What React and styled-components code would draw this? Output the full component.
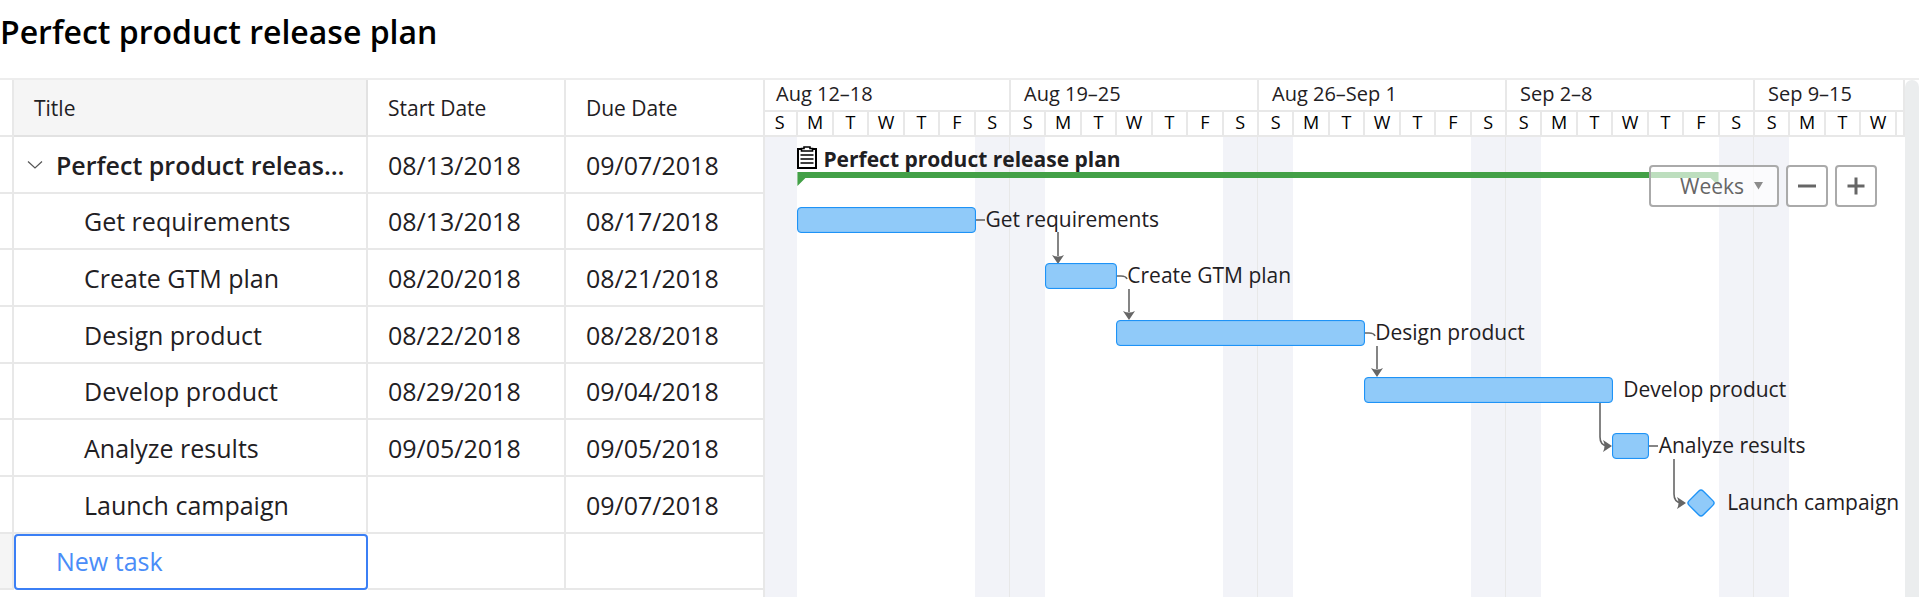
import React from 'react';
import styled, { createGlobalStyle, css } from 'styled-components';

const LINE = '#e8e8e8';

const GlobalStyle = createGlobalStyle`
  *, *::before, *::after { box-sizing: border-box; }
  body {
    margin: 0;
    background: #fff;
    color: #1f2023;
    font-family: 'Open Sans', 'Liberation Sans', sans-serif;
  }
`;

const Page = styled.main`
  display: flex;
  flex-direction: column;
  min-height: 100vh;
`;

const PageTitle = styled.h1`
  margin: 0;
  height: 78px;
  padding-top: 11px;
  font-size: 32px;
  line-height: 42px;
  font-weight: 600;
  color: #000;
`;

const Workspace = styled.div`
  flex: 1;
  display: flex;
  border-top: 2px solid #ededed;
`;

/* Rows share a 57px / 56px rhythm on both sides of the split. */
const rowHeight = css`
  height: 57px;
  &:nth-child(3n + 2) { height: 56px; }
`;

const Sheet = styled.table`
  flex: none;
  align-self: flex-start;
  width: 763px;
  table-layout: fixed;
  border-collapse: separate;
  border-spacing: 0;
`;

const HeadCell = styled.th`
  height: 57px;
  padding: 0 0 0 20px;
  border-right: 2px solid ${LINE};
  border-bottom: 2px solid ${LINE};
  background: ${(p) => (p.$active ? '#f5f5f5' : 'transparent')};
  ${(p) => p.$active && 'border-color: #e2e2e2;'}
  font-size: 21px;
  font-weight: 400;
  text-align: left;
  &:last-child { border-right: 0; }
`;

const SheetRow = styled.tr`
  ${rowHeight}
`;

const Cell = styled.td`
  padding: 0 0 0 ${(p) => p.$indent || 20}px;
  border-right: 2px solid ${LINE};
  border-bottom: 2px solid ${LINE};
  background: ${(p) => (p.$shaded ? '#f5f5f5' : 'transparent')};
  font-size: 25px;
  line-height: 32px;
  white-space: nowrap;
  &:last-child { border-right: 0; }
`;

const ParentTitle = styled.div`
  display: flex;
  align-items: center;
  gap: 13px;
  padding-right: 20px;
  font-weight: 600;
`;

const Ellipsis = styled.span`
  overflow: hidden;
  text-overflow: ellipsis;
`;

const Toggle = styled.button`
  flex: none;
  display: flex;
  width: 16px;
  padding: 0;
  border: 0;
  background: none;
`;

const NewTaskCell = styled.td`
  padding: 0;
`;

const NewTask = styled.input`
  display: block;
  width: 100%;
  height: 56px;
  padding: 0 0 2px 40px;
  border: 2px solid #3b7ff5;
  border-radius: 4px;
  outline: 0;
  background: #fff;
  font: 25px/32px 'Open Sans', sans-serif;
  &::placeholder { color: #4a8df8; opacity: 1; }
`;

const ChartPane = styled.section`
  flex: 1;
  min-width: 0;
  display: flex;
  flex-direction: column;
  position: relative;
  overflow: hidden;
  border-left: 2px solid ${LINE};
`;

const TimelineFrame = styled.div`
  flex: none;
  overflow: hidden;
  border-right: 2px solid ${LINE};
`;

const Timeline = styled.div`
  display: flex;
  width: 1240px;
  height: 57px;
  margin-left: -4px;
  border-bottom: 2px solid ${LINE};
`;

const Week = styled.div`
  width: 248px;
  display: flex;
  flex-direction: column;
`;

const WeekLabel = styled.div`
  height: 32px;
  padding-left: 13px;
  border-left: 2px solid ${LINE};
  border-bottom: 2px solid ${LINE};
  font-size: 20px;
  line-height: 28px;
`;

const Days = styled.div`
  flex: 1;
  display: grid;
  grid-template-columns: repeat(7, 1fr);
`;

const Day = styled.div`
  border-left: 2px solid ${LINE};
  font-size: 18px;
  line-height: 21px;
  text-align: center;
  color: #000;
`;

const Canvas = styled.div`
  flex: 1;
  display: grid;
  width: 1240px;
  margin-left: -3px;
  & > * { grid-area: 1 / 1; }
`;

const Stripes = styled.div`
  display: grid;
  grid-template-columns: repeat(35, 1fr);
`;

const Stripe = styled.div`
  background: ${(p) => (p.$weekend ? '#f2f3f8' : 'transparent')};
  border-right: ${(p) => (p.$weekEnd ? 1 : 0)}px solid ${LINE};
`;

const Rows = styled.div`
  display: flex;
  flex-direction: column;
`;

const ChartRow = styled.div`
  ${rowHeight}
  flex: none;
  display: grid;
  grid-template-columns: repeat(35, 1fr);
  grid-auto-rows: max-content;
`;

const Bar = styled.div`
  grid-column: ${(p) => p.$from} / ${(p) => p.$to};
  height: 26px;
  margin: 13px -1px 0 0;
  border: 1px solid #1e93f7;
  border-radius: 4px;
  background: #90caf9;
  box-shadow: inset 0 0 1px #1e93f7;
`;

const Label = styled.div`
  grid-column: ${(p) => p.$from} / -1;
  margin-top: 12px;
  padding-left: 11px;
  font-size: 21px;
  line-height: 26px;
  white-space: nowrap;
`;

const Milestone = styled.div`
  grid-column: ${(p) => p.$from} / -1;
  display: flex;
  align-items: flex-start;
  padding-left: 3px;
`;

const Diamond = styled.svg`
  flex: none;
  margin-top: 11px;
`;

const SummaryHead = styled.div`
  grid-column: 2 / -1;
  display: flex;
  gap: 6px;
  height: 35px;
  padding-top: 9px;
  font-size: 21px;
  line-height: 26px;
  font-weight: 700;
`;

const SummaryBar = styled.div`
  grid-column: ${(p) => p.$from} / ${(p) => p.$to};
  height: 14px;
  background: #43a047;
  clip-path: polygon(0 0, 100% 0, 100% 100%, calc(100% - 8px) 6px, 8px 6px, 0 100%);
`;

const Links = styled.svg`
  pointer-events: none;
`;

const ZoomBar = styled.div`
  position: absolute;
  top: 85px;
  right: 28px;
  display: flex;
  gap: 7px;
`;

const SelectWrap = styled.label`
  position: relative;
  display: block;
  svg {
    position: absolute;
    right: 16px;
    top: 17px;
    pointer-events: none;
  }
`;

const control = css`
  height: 42px;
  border: 2px solid #aaa;
  border-radius: 4px;
  background: rgba(255, 255, 255, 0.65);
  color: #666;
`;

const ScaleSelect = styled.select`
  ${control}
  appearance: none;
  width: 130px;
  padding: 0 0 0 29px;
  font: 21px/28px 'Open Sans', sans-serif;
`;

const ZoomButton = styled.button`
  ${control}
  display: flex;
  align-items: center;
  justify-content: center;
  width: 42px;
  padding: 0;
`;

const ScrollTrack = styled.div`
  flex: none;
  width: 14px;
  border-radius: 7px 7px 0 0;
  background: #ebedee;
`;

const TASKS = [
  { title: 'Get requirements', start: '08/13/2018', due: '08/17/2018', from: 2, to: 7 },
  { title: 'Create GTM plan', start: '08/20/2018', due: '08/21/2018', from: 9, to: 11 },
  { title: 'Design product', start: '08/22/2018', due: '08/28/2018', from: 11, to: 18 },
  { title: 'Develop product', start: '08/29/2018', due: '09/04/2018', from: 18, to: 25 },
  { title: 'Analyze results', start: '09/05/2018', due: '09/05/2018', from: 25, to: 26 },
  { title: 'Launch campaign', start: '', due: '09/07/2018', from: 27, milestone: true },
];

const FULL_WEEK = ['S', 'M', 'T', 'W', 'T', 'F', 'S'];
const WEEKS = [
  { label: 'Aug 12–18', days: FULL_WEEK },
  { label: 'Aug 19–25', days: FULL_WEEK },
  { label: 'Aug 26–Sep 1', days: FULL_WEEK },
  { label: 'Sep 2–8', days: FULL_WEEK },
  { label: 'Sep 9–15', days: ['S', 'M', 'T', 'W', ''] },
];

const LINKS = [
  'M214 83H223',
  'M296 95V119',
  'M355 139H359Q364 139 365 142',
  'M367 152V175',
  'M603 196H607Q612 196 613 199',
  'M615 209V232',
  'M838 266V300Q838 308 845 309',
  'M887 309H896',
  'M912 322V357Q912 365 919 366',
];

const HEADS = [
  'M290 118Q296 121 302 118L296 127Z',
  'M361 174Q367 177 373 174L367 183Z',
  'M609 231Q615 234 621 231L615 240Z',
  'M841 303Q844 309 841 315L850 309Z',
  'M915 360Q918 366 915 372L924 366Z',
];

function ClipboardIcon() {
  return (
    <svg width="20" height="24" viewBox="0 0 20 24" fill="none" stroke="#000" strokeWidth="2" aria-hidden="true">
      <path d="M4 3H1V22H19V3H16" />
      <path d="M4.5 5V2.5H7V1H13V2.5H15.5V5Z" fill="#fff" strokeWidth="1.6" />
      <path d="M3.5 9H16.5M3.5 13H16.5M3.5 17H16.5" strokeWidth="1.6" />
    </svg>
  );
}

export default function App() {
  return (
    <Page>
      <GlobalStyle />
      <PageTitle>Perfect product release plan</PageTitle>
      <Workspace>
        <Sheet>
          <colgroup>
            <col width="14" />
            <col width="354" />
            <col width="198" />
            <col />
          </colgroup>
          <thead>
            <tr>
              <HeadCell as="td" />
              <HeadCell scope="col" $active>Title</HeadCell>
              <HeadCell scope="col">Start Date</HeadCell>
              <HeadCell scope="col">Due Date</HeadCell>
            </tr>
          </thead>
          <tbody>
            <SheetRow>
              <Cell $indent={1} />
              <Cell $indent={13}>
                <ParentTitle>
                  <Toggle aria-label="Collapse">
                    <svg width="16" height="10" viewBox="0 0 16 10" fill="none" stroke="#555" strokeWidth="1.2">
                      <path d="M1 1.5L8 8L15 1.5" />
                    </svg>
                  </Toggle>
                  <Ellipsis>Perfect product release plan</Ellipsis>
                </ParentTitle>
              </Cell>
              <Cell>08/13/2018</Cell>
              <Cell>09/07/2018</Cell>
            </SheetRow>
            {TASKS.map((t) => (
              <SheetRow key={t.title}>
                <Cell $indent={1} />
                <Cell $indent={70}>{t.title}</Cell>
                <Cell>{t.start}</Cell>
                <Cell>{t.due}</Cell>
              </SheetRow>
            ))}
            <SheetRow>
              <Cell $indent={1} $shaded />
              <NewTaskCell>
                <NewTask aria-label="New task" placeholder="New task" />
              </NewTaskCell>
              <Cell />
              <Cell />
            </SheetRow>
          </tbody>
        </Sheet>

        <ChartPane aria-label="Timeline">
          <TimelineFrame>
            <Timeline>
              {WEEKS.map((w) => (
                <Week key={w.label}>
                  <WeekLabel>{w.label}</WeekLabel>
                  <Days>
                    {w.days.map((d, i) => (
                      <Day key={i}>{d}</Day>
                    ))}
                  </Days>
                </Week>
              ))}
            </Timeline>
          </TimelineFrame>
          <Canvas>
            <Stripes>
              {Array.from({ length: 35 }, (_, i) => (
                <Stripe key={i} $weekend={i % 7 === 0 || i % 7 === 6} $weekEnd={i % 7 === 6} />
              ))}
            </Stripes>
            <Links width="1240" height="454" aria-hidden="true">
              {LINKS.map((d) => (
                <path key={d} d={d} fill="none" stroke="#666" strokeWidth="1.6" />
              ))}
              {HEADS.map((d) => (
                <path key={d} d={d} fill="#666" />
              ))}
            </Links>
            <Rows>
              <ChartRow>
                <SummaryHead>
                  <ClipboardIcon />
                  Perfect product release plan
                </SummaryHead>
                <SummaryBar $from={2} $to={28} />
              </ChartRow>
              {TASKS.map((t) => (
                <ChartRow key={t.title}>
                  {t.milestone ? (
                    <Milestone $from={t.from}>
                      <Diamond width="30" height="30" viewBox="0 0 30 30" aria-hidden="true">
                        <rect x="5" y="5" width="20" height="20" rx="3" transform="rotate(45 15 15)" fill="#90caf9" stroke="#1e93f7" strokeWidth="1.4" />
                      </Diamond>
                      <Label>{t.title}</Label>
                    </Milestone>
                  ) : (
                    <>
                      <Bar $from={t.from} $to={t.to} />
                      <Label $from={t.to}>{t.title}</Label>
                    </>
                  )}
                </ChartRow>
              ))}
            </Rows>
          </Canvas>
          <ZoomBar>
            <SelectWrap>
              <ScaleSelect aria-label="Timeline scale" defaultValue="Weeks">
                <option>Weeks</option>
              </ScaleSelect>
              <svg width="9" height="8" viewBox="0 0 9 8" aria-hidden="true">
                <path d="M0 0H9L4.5 7.5Z" fill="#8c8c8c" />
              </svg>
            </SelectWrap>
            <ZoomButton aria-label="Zoom out">
              <svg width="18" height="18" viewBox="0 0 18 18" stroke="#666" strokeWidth="3">
                <path d="M0 9H18" />
              </svg>
            </ZoomButton>
            <ZoomButton aria-label="Zoom in">
              <svg width="18" height="18" viewBox="0 0 18 18" stroke="#666" strokeWidth="3">
                <path d="M0.5 9H17.5M9 0.5V17.5" />
              </svg>
            </ZoomButton>
          </ZoomBar>
        </ChartPane>
        <ScrollTrack />
      </Workspace>
    </Page>
  );
}
